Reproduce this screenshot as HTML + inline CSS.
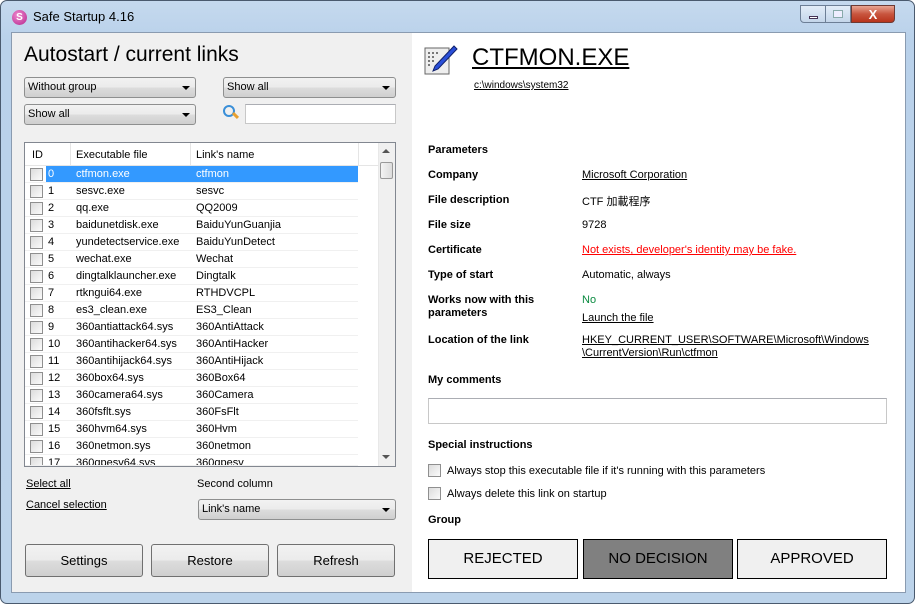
<!DOCTYPE html>
<html><head><meta charset="utf-8"><style>
*{box-sizing:border-box;margin:0;padding:0}
body{width:915px;height:604px;overflow:hidden;background:#fff;font-family:"Liberation Sans","Noto Sans CJK SC",sans-serif;font-size:11px;color:#000;position:relative}
.a{position:absolute;white-space:nowrap}
.frame{position:absolute;left:0;top:0;width:915px;height:604px;border-radius:7px;background:linear-gradient(#c5d9ee,#b9d1ea 40px,#bcd3ea);border:1px solid #4a5a6e}
.left{position:absolute;left:11px;top:32px;width:401px;height:561px;background:#f0f0f0;border:1px solid #8a9bb0;border-right:none}
.right{position:absolute;left:412px;top:32px;width:494px;height:561px;background:#fff;border:1px solid #8a9bb0;border-left:none}
.sel{position:absolute;height:21px;border:1px solid #8e8f8f;border-radius:3px;background:linear-gradient(#f2f2f2,#ebebeb 50%,#dddddd 50%,#cfcfcf);padding:3px 3px;font-size:11px}
.sel:after{content:"";position:absolute;right:5px;top:8px;border:4px solid transparent;border-top:4px solid #000;border-bottom:none}
.btn{position:absolute;height:33px;border:1px solid #707070;border-radius:3px;background:linear-gradient(#f2f2f2,#ebebeb 50%,#dddddd 50%,#cfcfcf);font-size:13px;text-align:center;line-height:31px}
.cb{position:absolute;width:13px;height:13px;border:1px solid #8f8f8f;background:linear-gradient(135deg,#dcdcdc,#fbfbfb)}
.row{position:absolute;left:25px;width:333px;height:17px;border-bottom:1px solid #f0f0f0}
.row span{position:absolute;top:2px}
u{text-decoration:underline}
.lb{position:absolute;left:428px;font-weight:bold;font-size:11px}
.v{position:absolute;left:582px}
.g{position:absolute;top:539px;height:40px;border:1px solid #000;background:#f0f0f0;font-size:15px;text-align:center;line-height:38px}
</style></head><body>
<div class="frame"></div>
<div class="a" style="left:12px;top:10px;width:15px;height:15px;border-radius:50%;background:radial-gradient(circle at 40% 35%,#f08ad0,#b3238a);color:#fff;font-size:10px;text-align:center;line-height:15px;font-weight:bold">S</div>
<div class="a" style="left:33px;top:9px;font-size:13px">Safe Startup 4.16</div>
<div class="a" style="left:800px;top:5px;width:26px;height:18px;border:1px solid #6d7f96;border-radius:0 0 0 4px;background:linear-gradient(#e3edf8,#c4d6ea)"><div style="position:absolute;left:8px;top:10px;width:9px;height:3px;background:#fff;border:1px solid #435"></div></div>
<div class="a" style="left:826px;top:5px;width:25px;height:18px;border:1px solid #6d7f96;border-left:none;background:linear-gradient(#e3edf8,#c4d6ea)"><div style="position:absolute;left:7px;top:4px;width:10px;height:8px;border:1px solid #8aa;background:#eef"></div></div>
<div class="a" style="left:851px;top:5px;width:44px;height:18px;border:1px solid #6d3a34;border-radius:0 0 4px 0;background:linear-gradient(#e8a593,#c8553e 50%,#b8341c);color:#fff;font-weight:bold;font-size:13px;text-align:center;line-height:17px">X</div>
<div class="left"></div><div class="right"></div>

<div class="a" style="left:24px;top:43px;font-size:21px">Autostart / current links</div>
<div class="sel" style="left:24px;top:77px;width:172px">Without group</div>
<div class="sel" style="left:223px;top:77px;width:173px">Show all</div>
<div class="sel" style="left:24px;top:104px;width:172px">Show all</div>
<div class="a" style="left:223px;top:105px;width:12px;height:12px;border:2px solid #3a8fd8;border-radius:50%"></div>
<div class="a" style="left:232px;top:114px;width:7px;height:3px;background:#e8a030;transform:rotate(45deg)"></div>
<div class="a" style="left:245px;top:104px;width:151px;height:20px;border:1px solid #c8c8c8;background:#fff;border-top-color:#abadb3"></div>

<div class="a" style="left:24px;top:142px;width:372px;height:325px;border:1px solid #828790;background:#fff;overflow:hidden">
 <div class="a" style="left:0;top:0;width:354px;height:23px;background:#fff;border-bottom:1px solid #e5e5e5"></div>
 <div class="a" style="left:7px;top:6px">ID</div>
 <div class="a" style="left:45px;top:0;height:23px;border-left:1px solid #e5e5e5"></div>
 <div class="a" style="left:51px;top:6px">Executable file</div>
 <div class="a" style="left:165px;top:0;height:23px;border-left:1px solid #e5e5e5"></div>
 <div class="a" style="left:171px;top:6px">Link's name</div>
 <div class="a" style="left:333px;top:0;height:23px;border-left:1px solid #e5e5e5"></div>
 <div class="a" style="left:353px;top:0;width:18px;height:323px;background:#f0f0f0;border-left:1px solid #e8e8e8"></div>
 <div class="a" style="left:357px;top:6px;border:4px solid transparent;border-bottom:4px solid #555;border-top:none"></div>
 <div class="a" style="left:355px;top:19px;width:13px;height:17px;border:1px solid #999;border-radius:2px;background:linear-gradient(90deg,#f4f4f4,#dcdcdc)"></div>
 <div class="a" style="left:357px;top:312px;border:4px solid transparent;border-top:4px solid #555;border-bottom:none"></div>
</div>
<div id="rows"></div>
<script>
var d=[["ctfmon.exe","ctfmon"],["sesvc.exe","sesvc"],["qq.exe","QQ2009"],["baidunetdisk.exe","BaiduYunGuanjia"],["yundetectservice.exe","BaiduYunDetect"],["wechat.exe","Wechat"],["dingtalklauncher.exe","Dingtalk"],["rtkngui64.exe","RTHDVCPL"],["es3_clean.exe","ES3_Clean"],["360antiattack64.sys","360AntiAttack"],["360antihacker64.sys","360AntiHacker"],["360antihijack64.sys","360AntiHijack"],["360box64.sys","360Box64"],["360camera64.sys","360Camera"],["360fsflt.sys","360FsFlt"],["360hvm64.sys","360Hvm"],["360netmon.sys","360netmon"],["360qpesv64.sys","360qpesv"]];
var h="";
for(var i=0;i<d.length;i++){var y=166+i*17;var s=i==0;
 var hh=i==17?(466-y):17;
 h+='<div class="row" style="top:'+y+'px;height:'+hh+'px;overflow:hidden">'+
 (s?'<div style="position:absolute;left:21px;top:0;width:312px;height:17px;background:#3399ff"></div>':'')+
 '<div class="cb" style="left:5px;top:2px"></div>'+
 '<span style="left:23px;'+(s?'color:#fff':'')+'">'+i+'</span>'+
 '<span style="left:51px;'+(s?'color:#fff':'')+'">'+d[i][0]+'</span>'+
 '<span style="left:171px;'+(s?'color:#fff':'')+'">'+d[i][1]+'</span></div>';}
document.getElementById("rows").innerHTML=h;
</script>

<div class="a" style="left:26px;top:478px"><u>Select all</u></div>
<div class="a" style="left:26px;top:499px"><u>Cancel selection</u></div>
<div class="a" style="left:197px;top:478px">Second column</div>
<div class="sel" style="left:198px;top:499px;width:198px">Link's name</div>
<div class="btn" style="left:25px;top:544px;width:118px">Settings</div>
<div class="btn" style="left:151px;top:544px;width:118px">Restore</div>
<div class="btn" style="left:277px;top:544px;width:118px">Refresh</div>

<svg class="a" style="left:424px;top:44px" width="34" height="32" viewBox="0 0 34 32">
<rect x="1" y="4" width="24" height="26" fill="#eee" stroke="#666"/>
<g fill="#777"><rect x="4" y="8" width="2" height="2"/><rect x="8" y="8" width="2" height="2"/><rect x="12" y="8" width="2" height="2"/><rect x="4" y="12" width="2" height="2"/><rect x="8" y="12" width="2" height="2"/><rect x="4" y="16" width="2" height="2"/><rect x="8" y="16" width="2" height="2"/><rect x="4" y="20" width="2" height="2"/></g>
<path d="M30 2 L33 5 L14 25 L9 27 L11 22 Z" fill="#2a4fd8" stroke="#10206a"/>
</svg>
<div class="a" style="left:472px;top:44px;font-size:24px"><u>CTFMON.EXE</u></div>
<div class="a" style="left:474px;top:80px;font-size:10px"><u>c:\windows\system32</u></div>

<div class="lb" style="top:144px">Parameters</div>
<div class="lb" style="top:169px">Company</div><div class="v" style="top:169px"><u>Microsoft Corporation</u></div>
<div class="lb" style="top:194px">File description</div><div class="v" style="top:193px">CTF 加載程序</div>
<div class="lb" style="top:219px">File size</div><div class="v" style="top:219px">9728</div>
<div class="lb" style="top:244px">Certificate</div><div class="v" style="top:244px;color:#f00"><u>Not exists, developer's identity may be fake.</u></div>
<div class="lb" style="top:269px">Type of start</div><div class="v" style="top:269px">Automatic, always</div>
<div class="lb" style="top:294px;line-height:13px">Works now with this<br>parameters</div><div class="v" style="top:294px;color:#0a8a40">No</div>
<div class="v" style="top:312px"><u>Launch the file</u></div>
<div class="lb" style="top:334px">Location of the link</div>
<div class="v" style="top:334px;line-height:13px"><u>HKEY_CURRENT_USER\SOFTWARE\Microsoft\Windows</u><br><u>\CurrentVersion\Run\ctfmon</u></div>
<div class="lb" style="top:374px">My comments</div>
<div class="a" style="left:428px;top:398px;width:459px;height:26px;border:1px solid #c8c8c8;border-top-color:#abadb3"></div>
<div class="lb" style="top:439px">Special instructions</div>
<div class="cb" style="left:428px;top:464px"></div><div class="a" style="left:447px;top:465px">Always stop this executable file if it's running with this parameters</div>
<div class="cb" style="left:428px;top:487px"></div><div class="a" style="left:447px;top:488px">Always delete this link on startup</div>
<div class="lb" style="top:514px">Group</div>
<div class="g" style="left:428px;width:150px">REJECTED</div>
<div class="g" style="left:583px;width:150px;background:#808080">NO DECISION</div>
<div class="g" style="left:737px;width:150px">APPROVED</div>
</body></html>
